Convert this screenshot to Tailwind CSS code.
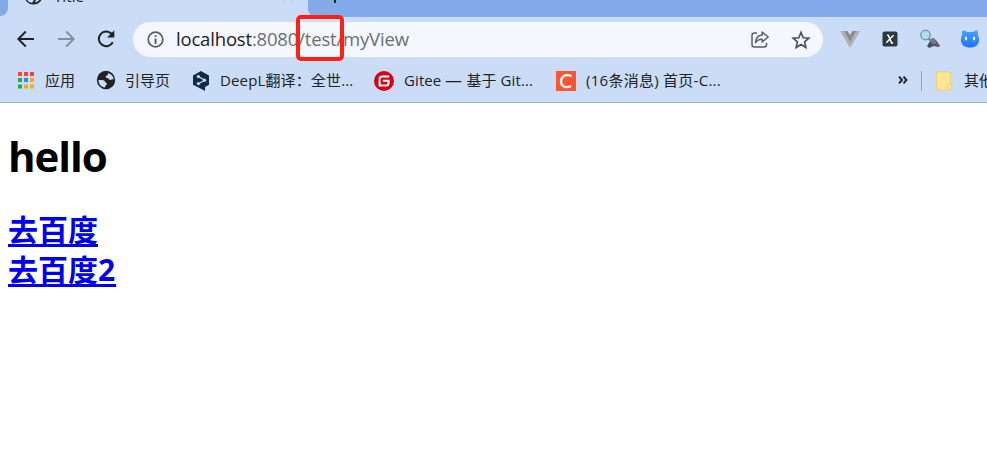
<!DOCTYPE html>
<html lang="zh">
<head>
<meta charset="utf-8">
<title>Title</title>
<script src="https://cdn.jsdelivr.net/npm/@tailwindcss/browser@4"></script>
</head>
<body class="w-[987px] h-[462px] overflow-hidden bg-white font-['Open_Sans','Noto_Sans_CJK_SC',sans-serif]">
<header class="h-[103px] bg-[#cbdcf6] border-b border-[#a3b2cc] text-[#202124]">
  <!-- tab strip -->
  <div class="h-[17px] flex overflow-hidden bg-[#cbdcf6]">
    <div class="w-2 h-4 bg-[#83abe9] rounded-br-[8px]"></div>
    <div class="w-[300px] h-[17px] flex items-end relative">
      <svg class="absolute left-[16px] -top-[14px]" width="19" height="19" viewBox="0 0 24 24"><circle cx="12" cy="12" r="11.5" fill="#202124"/><path d="M2.500 12c3 0 7 0 8 2.500s2 1 2 3-2 1.500-2 4C5 20.500 2.500 17 2.500 12zM14 21c4-1 7-4 7.500-8-2 0-2 3-4 3s-3 2-3.500 5z" fill="#cbdcf6"/></svg>
      <span class="absolute left-[46px] -top-[14px] text-[15px] leading-[20px] tracking-[0.1px]">Title</span>
      <svg class="absolute left-[274px] -top-[11px]" width="12" height="12" viewBox="0 0 12 12"><path d="M1 1l10 10M11 1L1 11" stroke="#59616f" stroke-width="1.500"/></svg>
    </div>
    <div class="flex-1 h-[17px] bg-[#83abe9] rounded-bl-[8px] relative">
      <div class="absolute left-[26px] top-0 w-[2px] h-[3px] bg-[#202124]"></div>
    </div>
  </div>
  <!-- toolbar -->
  <div class="h-[45px] flex items-center">
    <div class="w-[133px] flex pl-4 gap-5 -mt-px">
      <svg width="20" height="20" viewBox="0 0 20 20" fill="none" stroke="#202124" stroke-width="1.900"><path d="M18 10H2.500M9.800 2.500L2.300 10l7.500 7.500"/></svg>
      <svg width="20" height="20" viewBox="0 0 20 20" fill="none" stroke="#858e9f" stroke-width="1.900"><path d="M2 10h15.500M10.200 2.500l7.500 7.500-7.500 7.500"/></svg>
      <svg width="20" height="20" viewBox="0 0 20 20"><path d="M16.800 13.200A7.400 7.400 0 1 1 15.600 4.700" fill="none" stroke="#202124" stroke-width="2"/><path d="M18.300 1.200v7.300h-7.300z" fill="#202124"/></svg>
    </div>
    <div class="w-[690px] h-[35px] rounded-full bg-[#f4f8fd] flex items-center pl-[14px] pr-[13px]">
      <svg width="17" height="17" viewBox="0 0 17 17"><circle cx="8.500" cy="8.500" r="7.300" fill="none" stroke="#5a5e64" stroke-width="1.700"/><path d="M7.600 7.500h1.900V13H7.600zM7.600 4.200h1.900v1.900H7.600z" fill="#5a5e64"/></svg>
      <span class="ml-[12px] -mt-[2px] w-[240px] whitespace-nowrap text-[18.500px] leading-[35px] tracking-[-0.180px] text-[#6b6f75]"><span class="text-[#202124]">localhost</span>:8080/test/myView</span>
      <svg class="ml-auto" width="20" height="20" viewBox="0 0 20 20" fill="none" stroke="#5a5e64" stroke-width="1.500" stroke-linejoin="round"><path d="M7 3H4.500Q2 3 2 5.500v9Q2 17 4.500 17H14q2.500 0 2.500-2.500V13"/><path d="M12.200 2l6 5-6 5V9.200C9 9 7.200 10.200 5.500 12.700 5.800 8.500 8 5.200 12.200 4.900z"/></svg>
      <svg class="ml-[21px] -mr-px" width="20" height="20" viewBox="0 0 20 20"><path d="M10 2.400l2.200 5.300 5.700.5-4.300 3.700 1.300 5.600-4.900-3-4.900 3 1.300-5.600-4.300-3.700 5.700-.5z" fill="none" stroke="#4b4f55" stroke-width="1.600"/></svg>
    </div>
    <div class="flex items-center pl-[17px] gap-5 -mt-px">
      <svg width="20" height="20" viewBox="0 0 20 20"><path d="M0 2h20L10 19z" fill="#b1b1b1"/><path d="M4 2h4l2 3 2-3h4l-6 10.500z" fill="#888b8f"/><path d="M7.500 2h5L10 6z" fill="#cbdcf6"/></svg>
      <svg width="20" height="20" viewBox="0 0 20 20"><rect x="2.500" y="2.500" width="15" height="15" rx="2" fill="#2b3a3f"/><path d="M7 6.300h1.300l3.300 7.600h1.600M13.500 6.200l-7.200 7.600" fill="none" stroke="#fff" stroke-width="1.500"/></svg>
      <svg width="20" height="20" viewBox="0 0 20 20"><path d="M7 17l5-8 4 2 4 6-2 1-4-1-5 2z" fill="#465064"/><path d="M10 11l4-2 3 5-4 2z" fill="#6f7a91"/><circle cx="17.800" cy="16.300" r="1.500" fill="#a84b35"/><circle cx="5.500" cy="6" r="4.700" fill="#a9e0f2" stroke="#8495ad" stroke-width="1.500"/><path d="M8.500 9.500l3 3" stroke="#707f96" stroke-width="2"/></svg>
      <svg width="20" height="20" viewBox="0 0 20 20" class="shrink-0"><defs><linearGradient id="cat" x2="0" y2="1"><stop stop-color="#48a2ff"/><stop offset="1" stop-color="#1f72f4"/></linearGradient></defs><path d="M3 1.300Q4.800 1.300 7 3h6q2.200-1.700 4-1.700 1.300 1 .9 4.700 1.200 2 1.200 5c0 5-4 7.500-9.100 7.500S.9 16 .9 11q0-3 1.200-5Q1.700 2.300 3 1.300z" fill="url(#cat)"/><ellipse cx="6" cy="9.500" rx="1.100" ry="2" fill="#fff"/><ellipse cx="14" cy="9.500" rx="1.100" ry="2" fill="#fff"/></svg>
    </div>
  </div>
  <!-- bookmarks bar -->
  <nav class="h-[37px] flex items-center text-[15px] leading-[37px] whitespace-nowrap">
    <div class="w-[96px] shrink-0 flex items-center pl-4 gap-[9px]">
      <svg width="20" height="20" viewBox="0 0 20 20"><path d="M2 1h4v4H2zM8 1h4v4H8zM14 1h4v4h-4z" fill="#fb4137"/><path d="M2 7h4v4H2zM2 13.500h4v4H2z" fill="#2da653"/><path d="M8 7h4v4H8z" fill="#2291f5"/><path d="M14 7h4v4h-4zM8 13.500h4v4H8zM14 13.500h4v4h-4z" fill="#faab0a"/></svg>
      <span>应用</span>
    </div>
    <div class="w-[95px] shrink-0 flex items-center gap-[9px]">
      <svg class="-mt-px" width="20" height="20" viewBox="0 0 24 24"><circle cx="12" cy="12" r="11" fill="#202124"/><path d="M3 12c3 0 7-.5 8 2s2 .5 2 2.500-2 1.500-2 4.500C6 20.500 3 17 3 12zM14.500 3.500c4 1 6.500 4 6.700 8-2-1-2.200.5-4 .5-2 0-1.200-2-3.200-2S11 8 12 7s2.500 0 2.500-3.500z" fill="#cbdcf6"/></svg>
      <span>引导页</span>
    </div>
    <div class="w-[183px] shrink-0 flex items-center gap-[9px]">
      <svg width="20" height="22" viewBox="0 0 20 22"><path d="M10 1l8 4.600v9.200l-4 2.300V21l-4.500-2.400L2 14.800V5.600z" fill="#0f2b46"/><path d="M7.500 6.500l6 3.700-6 3.500" fill="none" stroke="#cbdcf6" stroke-width="1.200"/><g fill="#cbdcf6"><circle cx="7.400" cy="6.600" r="1.600"/><circle cx="13.500" cy="10.200" r="1.600"/><circle cx="7.400" cy="13.600" r="1.600"/></g></svg>
      <span class="tracking-[0.140px]">DeepL翻译：全世...</span>
    </div>
    <div class="w-[182px] shrink-0 flex items-center gap-[10px]">
      <svg width="20" height="20" viewBox="0 0 20 20"><circle cx="10" cy="10" r="10" fill="#d90013"/><path d="M15.200 5.600H8.300Q5.600 5.600 5.600 8.300v6.300h6.500q2.500 0 2.500-2.500V9.700H8.800" fill="none" stroke="#fff" stroke-width="2"/></svg>
      <span class="tracking-[0.100px]">Gitee <span class="inline-block w-[17px] origin-left scale-x-[1.13]">—</span> 基于 Git...</span>
    </div>
    <div class="w-[342px] shrink-0 flex items-center gap-[10px]">
      <svg width="20" height="20" viewBox="0 0 20 20"><path d="M0 0h20v20H0z" fill="#fc5531"/><path d="M15.500 5.200C11.500 2.700 5 4.500 5 10.500c0 5.500 5.500 7 10 4.500" fill="none" stroke="#fff" stroke-width="2.300"/></svg>
      <span class="tracking-[0.270px]">(16条消息) 首页-C...</span>
    </div>
    <svg class="shrink-0 -mt-[2px]" width="10" height="8" viewBox="0 0 10 8"><path d="M1 .7L4 4 1 7.300M5.500.7l3 3.300-3 3.300" fill="none" stroke="#202124" stroke-width="1.900"/></svg>
    <div class="ml-[13px] w-px h-5 shrink-0 bg-[#929fb5]"></div>
    <svg class="ml-[13px] shrink-0" width="20" height="20" viewBox="0 0 20 20"><path d="M2.500 1h12q.8 0 .8.800V13l1.500 1v3.500l-2 1.500H2.500q-1 0-1-1V2q0-1 1-1z" fill="#ffe695" stroke="#edcf6c"/><path d="M12 18.500V15q0-2 3-2" fill="none" stroke="#edcf6c"/></svg>
    <span class="ml-[9px]">其他书签</span>
  </nav>
</header>
<main class="pl-2 pt-[25px]">
  <h1 class="text-[42px] leading-[56px] font-bold text-black tracking-[-1.100px]">hello</h1>
  <div class="mt-[26px] flex flex-col items-start text-[30px] leading-[40px] font-bold text-[#0000ee]">
    <a class="underline decoration-[3px] underline-offset-[3px]">去百度</a>
    <a class="underline decoration-[3px] underline-offset-[3px]">去百度<span class="tracking-[1px]">2</span></a>
  </div>
</main>
<div class="absolute left-[296px] top-[15px] w-[48px] h-[46px] border-[4px] border-[#ff2015] rounded-[5px]"></div>
</body>
</html>
